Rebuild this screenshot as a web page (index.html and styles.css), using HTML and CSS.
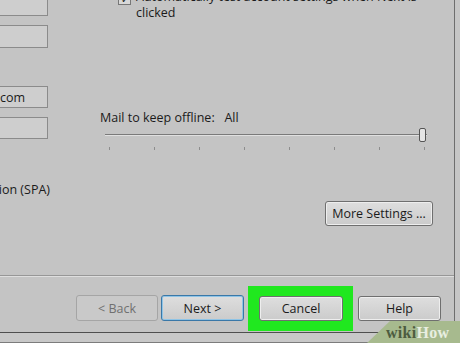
FILE: index.html
```html
<!DOCTYPE html>
<html lang="en">
<head>
    <meta charset="UTF-8">
    <title>Account Settings</title>
    <link rel="stylesheet" href="styles.css">
</head>
<body>
    <div class="dialog">
        <div class="upper">
            <div class="fields">
                <div class="field field_first"></div>
                <div class="field field_second"></div>
                <div class="field field_mail"><span>yourname@outlook.com</span></div>
                <div class="field field_pass"></div>
                <div class="spa_label"><span>Require logon using Secure Password Authentication (SPA)</span></div>
            </div>

            <div class="options">
                <div class="check_row">
                    <span class="checkbox">&#10003;</span>
                    <span class="check_text">Automatically test account settings when Next is<br>clicked</span>
                </div>

                <div class="offline_label">Mail to keep offline:&nbsp;&nbsp;&nbsp;All</div>
                <div class="slider">
                    <div class="track"></div>
                    <div class="thumb"></div>
                </div>
                <div class="ticks">
                    <span></span><span></span><span></span><span></span>
                    <span></span><span></span><span></span><span></span>
                </div>

                <div class="more_row">
                    <button type="button" class="btn btn_more">More Settings ...</button>
                </div>
            </div>
        </div>

        <div class="separator"></div>

        <div class="buttons">
            <button type="button" class="btn btn_back">&lt; Back</button>
            <button type="button" class="btn btn_next">Next &gt;</button>
            <div class="highlight">
                <button type="button" class="btn btn_cancel">Cancel</button>
            </div>
            <button type="button" class="btn btn_help">Help</button>
        </div>

        <div class="bottom_strip"></div>
    </div>

    <div class="wiki_badge">
        <span class="wiki_dark">wiki</span><span class="wiki_light">How</span>
    </div>
</body>
</html>
```

FILE: styles.css
```css
/* 기본 설정 */
* {
    box-sizing: border-box;
    margin: 0;
    padding: 0;
}

html,
body {
    width: 460px;
    height: 343px;
    overflow: hidden;
    background-color: #c6c6c6;
    color: #1b1b1b;
    font-family: "Open Sans", "Noto Sans", sans-serif;
    font-size: 12.5px;
}

body {
    position: relative;
}

/* 대화상자 */
.dialog {
    display: flex;
    flex-direction: column;
    width: 455px;
    height: 343px;
    background-color: #c4c4c4;
    border-right: 1px solid #6e6e6e;
}

.upper {
    display: flex;
    height: 275px;
}

/* 왼쪽 입력칸 */
.fields {
    display: flex;
    flex-direction: column;
    width: 47px;
    flex: none;
}

.field {
    display: flex;
    justify-content: flex-end;
    align-items: center;
    margin-left: -60px;
    width: 108px;
    height: 23px;
    background-color: #cecece;
    border: 1px solid #8b8b8b;
    overflow: hidden;
    white-space: nowrap;
}

.field_first {
    margin-top: -8px;
    height: 24px;
}

.field_second {
    margin-top: 9px;
}

.field_mail {
    margin-top: 38px;
    height: 22px;
    padding-right: 22px;
}

.field_pass {
    margin-top: 9px;
    height: 22px;
}

.spa_label {
    display: flex;
    justify-content: flex-end;
    width: 50px;
    margin-top: 43px;
    white-space: nowrap;
    line-height: 16px;
}

/* 오른쪽 옵션 */
.options {
    display: flex;
    flex-direction: column;
    flex: 1;
    padding-left: 53px;
    padding-right: 21px;
}

.check_row {
    display: flex;
    gap: 5px;
    margin-top: -11px;
    padding-left: 18px;
    line-height: 16px;
}

.checkbox {
    display: flex;
    align-items: center;
    justify-content: center;
    flex: none;
    width: 13px;
    height: 13px;
    margin-top: 3px;
    border: 1px solid #777;
    background-color: #d8d8d8;
    font-size: 10px;
    line-height: 1;
}

.offline_label {
    margin-top: 89px;
    line-height: 16px;
    white-space: nowrap;
}

.slider {
    position: relative;
    margin-left: 5px;
    width: 322px;
    height: 18px;
}

.track {
    margin-top: 8px;
    height: 2px;
    border-top: 1px solid #7a7a7a;
    border-bottom: 1px solid #e0e0e0;
}

.thumb {
    position: absolute;
    right: 1px;
    top: 2px;
    width: 7px;
    height: 14px;
    background-color: #e4e4e4;
    border: 1px solid #555;
    border-radius: 2px;
}

.ticks {
    display: flex;
    gap: 44px;
    margin-left: 9px;
    margin-top: 3px;
}

.ticks span {
    width: 1px;
    height: 3px;
    background-color: #8d8d8d;
}

.more_row {
    display: flex;
    justify-content: flex-end;
    margin-top: 51px;
}

/* 버튼 */
.btn {
    height: 26px;
    font-family: "Open Sans", "Noto Sans", sans-serif;
    font-size: 12.5px;
    color: #1b1b1b;
    border: 1px solid #6f6f6f;
    border-radius: 3px;
    background: linear-gradient(#dedede, #cbcbcb);
    box-shadow: inset 0 0 0 1px #eeeeee;
}

.btn_more {
    width: 108px;
    height: 25px;
}

.separator {
    height: 2px;
    border-top: 1px solid #979797;
    border-bottom: 1px solid #dedede;
}

.buttons {
    display: flex;
    align-items: flex-start;
    height: 55px;
    padding-left: 76px;
    padding-top: 9px;
}

.btn_back {
    width: 82px;
    margin-top: 9px;
    color: #707070;
    border-color: #a5a5a5;
    background: #c9c9c9;
    box-shadow: none;
}

.btn_next {
    width: 83px;
    margin-top: 9px;
    margin-left: 3px;
    border-color: #3a78a8;
    box-shadow: inset 0 0 0 1px #8fc4e6;
}

.highlight {
    display: flex;
    margin-left: 4px;
    padding: 10px 10px 10px 11px;
    background-color: #20e81f;
}

.btn_cancel {
    width: 84px;
    height: 25px;
}

.btn_help {
    width: 83px;
    height: 25px;
    margin-top: 10px;
    margin-left: 5px;
}

.bottom_strip {
    flex: 1;
    border-top: 1px solid #4f4f4f;
    background-color: #c8c8c8;
    box-shadow: inset 0 -3px 0 -2px #7c7c7c;
}

/* wikiHow 배지 */
.wiki_badge {
    position: absolute;
    right: 0;
    bottom: 0;
    width: 93px;
    height: 22px;
    padding: 3px 0 0 19px;
    background-color: #a7ba8e;
    clip-path: polygon(23px 0, 100% 0, 100% 100%, 0 100%);
    font-family: "Liberation Serif", serif;
    font-size: 16px;
    font-weight: 700;
    line-height: 17px;
    letter-spacing: 0.3px;
    white-space: nowrap;
}

.wiki_dark {
    color: #4d5c3f;
}

.wiki_light {
    color: #e8eee0;
}
```
